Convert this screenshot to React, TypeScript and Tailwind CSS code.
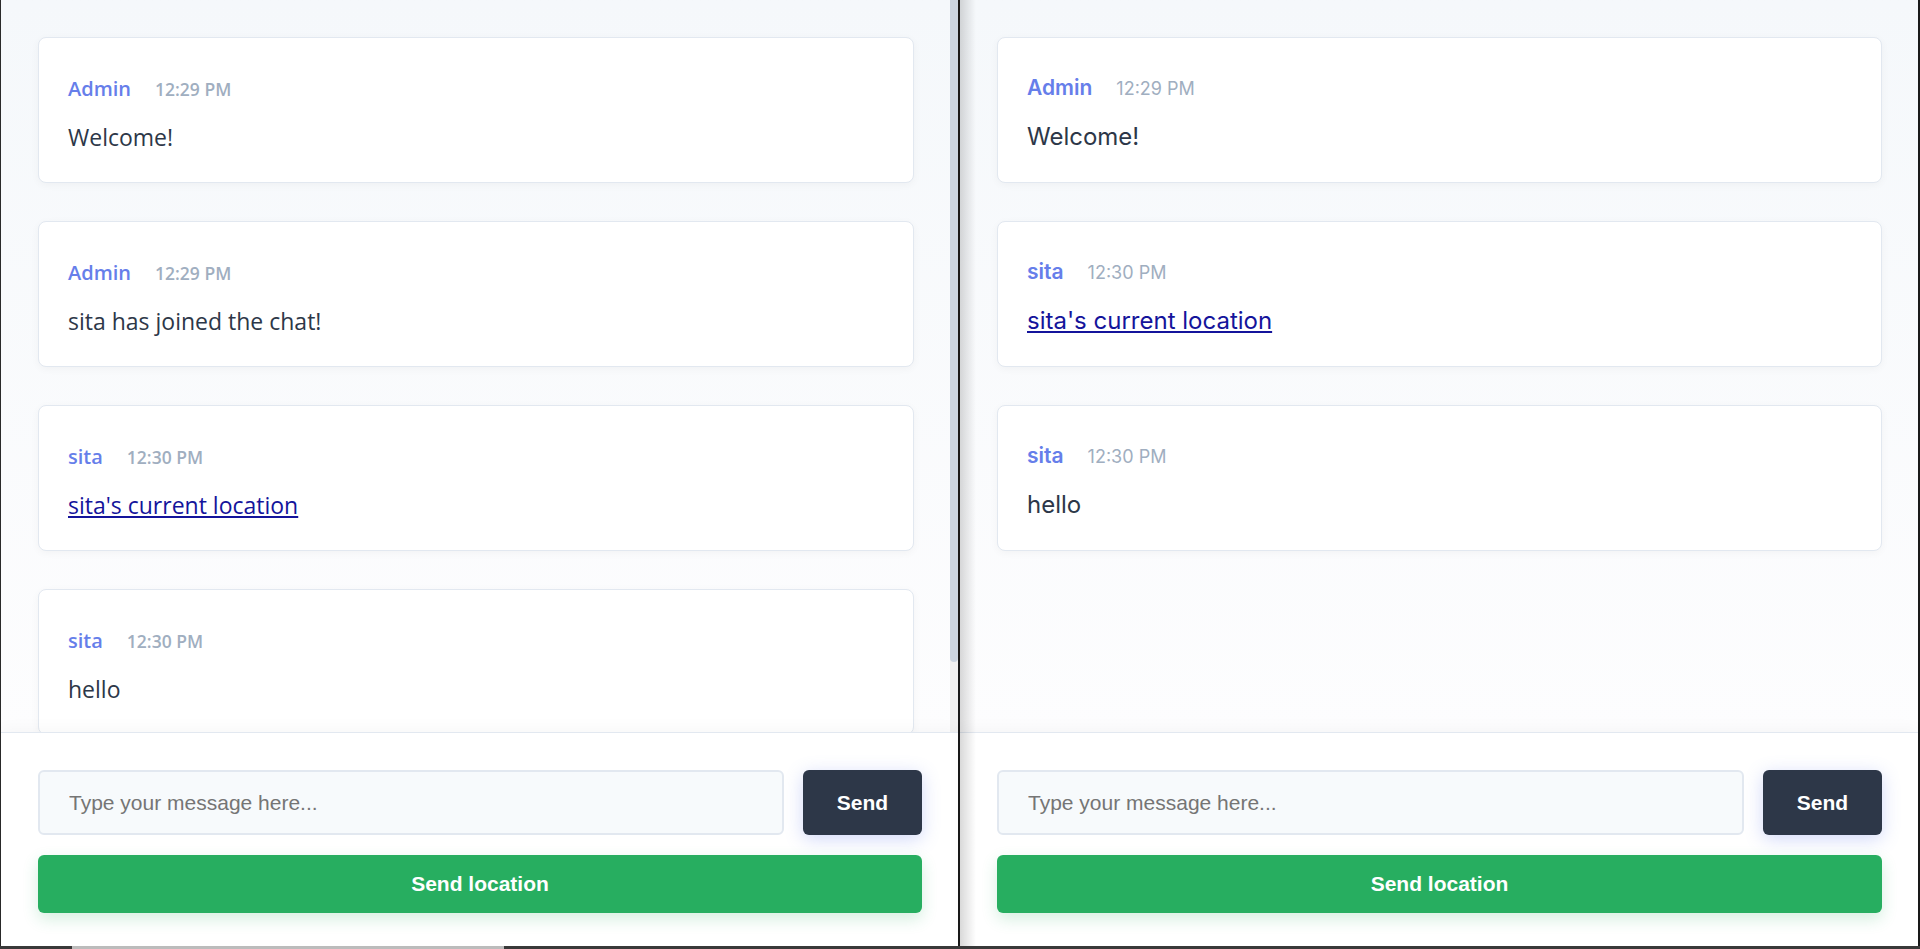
import React from "react";

type Msg = { name: string; time: string; text: string; link?: boolean };

const leftMessages: Msg[] = [
  { name: "Admin", time: "12:29 PM", text: "Welcome!" },
  { name: "Admin", time: "12:29 PM", text: "sita has joined the chat!" },
  { name: "sita", time: "12:30 PM", text: "sita's current location", link: true },
  { name: "sita", time: "12:30 PM", text: "hello" },
];

const rightMessages: Msg[] = [
  { name: "Admin", time: "12:29 PM", text: "Welcome!" },
  { name: "sita", time: "12:30 PM", text: "sita's current location", link: true },
  { name: "sita", time: "12:30 PM", text: "hello" },
];

function MessageCard({ msg, variant }: { msg: Msg; variant: "left" | "right" }) {
  const left = variant === "left";
  const font = left
    ? "font-['Open_Sans',sans-serif] pt-[37px] pb-[29px]"
    : "font-['Inter',sans-serif] pt-[36px] pb-[29px]";
  const body = left ? "text-[23px]" : "text-[24px]";
  return (
    <div
      className={`shrink-0 rounded-[8px] border border-[#e2e8f0] bg-white px-[29px] shadow-[0_2px_8px_rgba(0,0,0,0.04)] ${font}`}
    >
      <div className="mb-[18px] flex items-baseline gap-[24px] leading-[28px]">
        <span
          className={
            left
              ? "text-[20px] font-semibold text-[#667eea]"
              : "text-[21px] font-semibold text-[#667eea]"
          }
        >
          {msg.name}
        </span>
        <span
          className={
            left
              ? "text-[17.5px] font-semibold text-[#a0aec0]"
              : "text-[18px] font-normal text-[#a0aec0]"
          }
        >
          {msg.time}
        </span>
      </div>
      <p className={`${body} leading-[32px]`}>
        {msg.link ? (
          <a href="#" className="text-[#14149b] underline">
            {msg.text}
          </a>
        ) : (
          <span className="text-[#2d3748]">{msg.text}</span>
        )}
      </p>
    </div>
  );
}

function ChatWindow({
  messages,
  variant,
  scrollbar,
}: {
  messages: Msg[];
  variant: "left" | "right";
  scrollbar?: boolean;
}) {
  return (
    <div className="relative flex h-full min-w-0 flex-1 flex-col bg-white">
      <div className="flex min-h-0 flex-1 bg-gradient-to-b from-[#f5f8fb] to-[#fdfdfe]">
        <div className="flex min-w-0 flex-1 flex-col gap-[38px] overflow-hidden pl-[37px] pr-[36px] pt-[37px]">
          {messages.map((m, i) => (
            <MessageCard key={i} msg={m} variant={variant} />
          ))}
        </div>
        {scrollbar && (
          <div className="flex w-[8px] shrink-0 flex-col bg-[#f1f1f1]">
            <div className="h-[662px] rounded-b-[4px] bg-[#cbd5e1]" />
          </div>
        )}
      </div>
      <div className="shrink-0 border-t border-[#e2e8f0] bg-white pl-[37px] pr-[36px] pt-[37px] pb-[33px] shadow-[0_-4px_14px_rgba(0,0,0,0.03)]">
        <div className="flex gap-[19px]">
          <input
            placeholder="Type your message here..."
            className="h-[65px] min-w-0 flex-1 rounded-[6px] border-2 border-[#e2e8f0] bg-[#f7fafc] px-[29px] font-['Liberation_Sans',Arial,sans-serif] text-[21px] text-[#2d3748] outline-none placeholder:text-[#757575]"
          />
          <button className="h-[65px] w-[119px] shrink-0 rounded-[6px] bg-[#2d3748] font-['Liberation_Sans',Arial,sans-serif] text-[21px] font-bold text-white shadow-[0_4px_18px_rgba(102,126,234,0.3)]">
            Send
          </button>
        </div>
        <button className="mt-[20px] h-[58px] w-full rounded-[6px] bg-[#27ae60] font-['Liberation_Sans',Arial,sans-serif] text-[21px] font-bold text-white shadow-[0_6px_16px_rgba(39,174,96,0.2)]">
          Send location
        </button>
      </div>
      {variant === "right" && (
        <div className="pointer-events-none absolute inset-y-0 left-0 w-[16px] bg-gradient-to-r from-black/15 to-transparent" />
      )}
    </div>
  );
}

export default function App() {
  return (
    <div className="flex h-[949px] w-[1920px] flex-col overflow-hidden bg-[#2a2a2a]">
      <div className="flex h-[946px]">
        <div className="flex h-full w-[958px] shrink-0 border-l border-[#2a2a2a]">
          <ChatWindow messages={leftMessages} variant="left" scrollbar />
        </div>
        <div className="w-[2px] shrink-0 bg-[#1a1a1a]" />
        <div className="flex h-full flex-1">
          <ChatWindow messages={rightMessages} variant="right" />
        </div>
        <div className="w-[2px] shrink-0 bg-[#1a1a1a]" />
      </div>
      <div className="flex h-[3px]">
        <div className="w-[72px] bg-[#3a3a3a]" />
        <div className="w-[432px] bg-[#bdbdbd]" />
        <div className="flex-1 bg-[#3a3a3a]" />
      </div>
    </div>
  );
}
